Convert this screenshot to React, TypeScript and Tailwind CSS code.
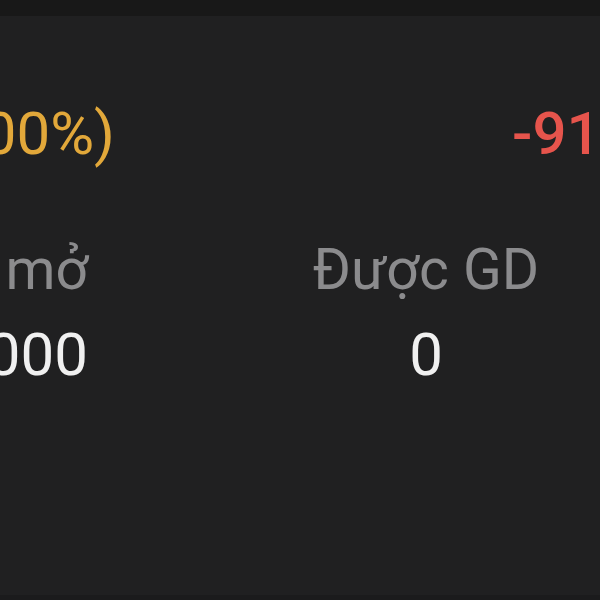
import React from 'react';

const font = { fontFamily: 'Roboto, "Noto Sans", Arial, sans-serif' };

function App() {
  return (
    <div className="h-[600px] w-[600px] overflow-hidden bg-[#202021] flex flex-col" style={font}>
      <div className="h-[16px] bg-[#181818] shrink-0" />

      {/* change row */}
      <div className="mt-[88px] flex items-start h-[60px] text-[60px] leading-[60px] whitespace-nowrap">
        <div className="w-[115px] shrink-0 flex justify-end text-[#e2a83a]">
          <span className="shrink-0">0 (0.00%)</span>
        </div>
        <div className="ml-[397px] shrink-0 text-[#e6544c] font-medium">-91,000</div>
      </div>

      {/* labels */}
      <div className="mt-[77px] flex h-[57px] text-[57px] leading-[57px] text-[#8b8b8d] whitespace-nowrap">
        <div className="w-[88px] shrink-0 flex justify-end">
          <span className="shrink-0">KL mở</span>
        </div>
        <div className="ml-[164px] flex-1 flex justify-center">Được GD</div>
      </div>

      {/* values */}
      <div className="mt-[27px] flex h-[60px] text-[60px] leading-[60px] text-[#f0f0f0] whitespace-nowrap">
        <div className="w-[88px] shrink-0 flex justify-end">
          <span className="shrink-0">1,000</span>
        </div>
        <div className="ml-[164px] flex-1 flex justify-center">0</div>
      </div>

      <div className="flex-1" />
      <div className="h-[5px] bg-[#1b1b1c] shrink-0" />
    </div>
  );
}

export default App;
